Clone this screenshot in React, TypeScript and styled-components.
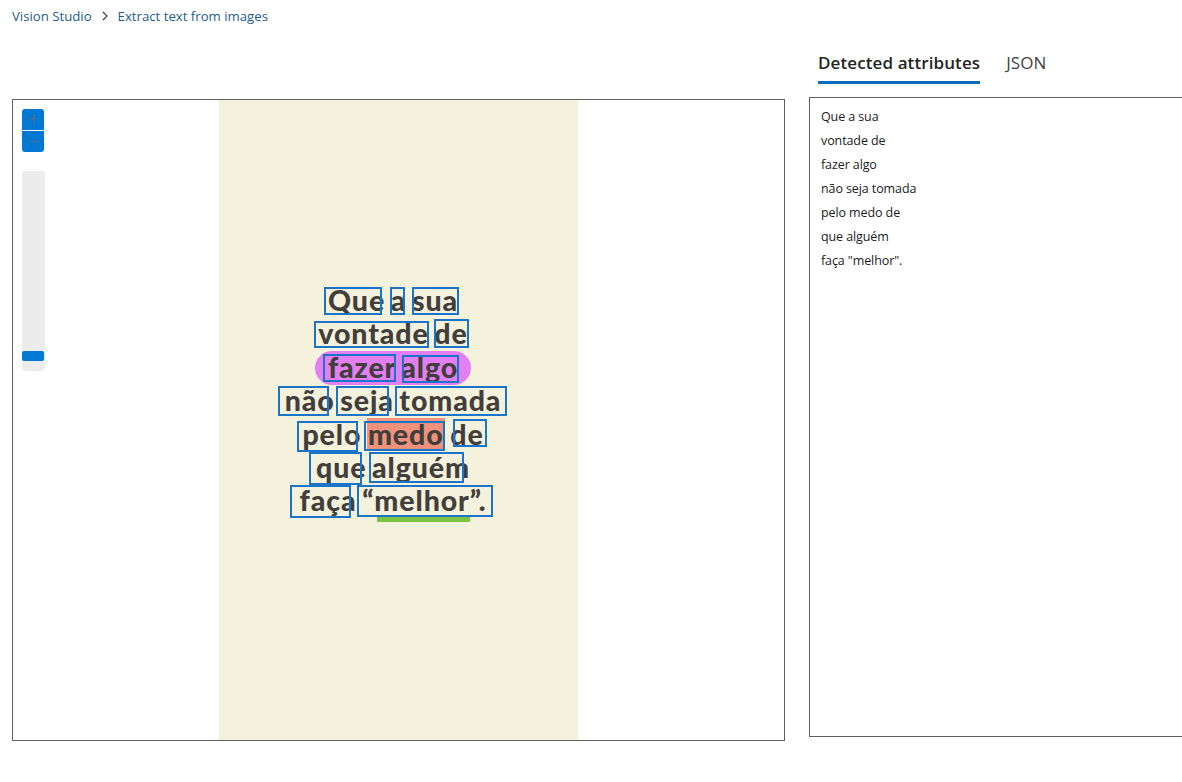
import styled, { createGlobalStyle } from "styled-components";

const GlobalStyle = createGlobalStyle`
    html, body {
        margin: 0;
        padding: 0;
        background: #ffffff;
        overflow: hidden;
    }
    body {
        font-family: "Open Sans", "Noto Sans", sans-serif;
        color: #242424;
    }
`;

const Page = styled.div`
    width: 1182px;
    height: 782px;
    padding: 6px 0 0 12px;
    box-sizing: border-box;
`;

const Breadcrumb = styled.nav`
    display: flex;
    align-items: center;
    gap: 9px;
    height: 20px;
    font-size: 13.2px;
    color: #1f5d8c;
`;

const Crumb = styled.span`
    white-space: nowrap;
`;

const Main = styled.div`
    display: flex;
    gap: 24px;
    margin-top: 14px;
`;

const LeftColumn = styled.div`
    padding-top: 59px;
`;

const Canvas = styled.div`
    position: relative;
    width: 771px;
    height: 640px;
    border: 1px solid #5f5f5f;
    display: flex;
    justify-content: center;
    overflow: hidden;
`;

const ZoomControl = styled.div`
    position: absolute;
    left: 9px;
    top: 9px;
    display: flex;
    flex-direction: column;
    gap: 19px;
`;

const ZoomButtons = styled.div`
    display: flex;
    flex-direction: column;
    gap: 1px;
`;

const ZoomButton = styled.div<{ $top?: boolean }>`
    width: 22px;
    height: 21px;
    background: #0078d4;
    border-radius: ${(p) => (p.$top ? "3px 3px 0 0" : "0 0 3px 3px")};
    color: #4a6c98;
    font-size: 15px;
    font-family: "DejaVu Sans", sans-serif;
    display: flex;
    align-items: center;
    justify-content: center;
    line-height: 1;
`;

const SliderTrack = styled.div`
    width: 23px;
    height: 200px;
    background: #ececec;
    border-radius: 4px;
    display: flex;
    flex-direction: column;
    justify-content: flex-end;
    padding-bottom: 10px;
    box-sizing: border-box;
`;

const SliderThumb = styled.div`
    width: 22px;
    height: 10px;
    background: #0078d4;
    border-radius: 2px;
`;

const Photo = styled.div`
    position: relative;
    width: 359px;
    height: 640px;
    background: #f4f1dc;
    box-sizing: border-box;
    padding-top: 184px;
    padding-right: 11px;
    display: flex;
    flex-direction: column;
    align-items: center;
`;

const PhotoLine = styled.div`
    height: 33.4px;
    line-height: 33.4px;
    font-family: "Lato", "DejaVu Sans", sans-serif;
    font-weight: 900;
    font-size: 28.5px;
    letter-spacing: 0.9px;
    word-spacing: -2px;
    color: #423e3b;
    white-space: nowrap;
`;

const Pill = styled.span`
    display: inline-block;
    height: 34px;
    line-height: 33px;
    background: #e37ff2;
    border-radius: 17px;
    padding: 0 13px;
`;

const Salmon = styled.span`
    display: inline-block;
    height: 32px;
    line-height: 32px;
    background: #f0917b;
    padding: 0 1px;
`;

const Underlined = styled.span`
    position: relative;
    &::after {
        content: "";
        position: absolute;
        left: 15px;
        right: 16px;
        bottom: -5px;
        height: 6px;
        background: #7cc243;
    }
`;

const WordBox = styled.div`
    position: absolute;
    border: 2px solid #1a74c9;
    box-sizing: border-box;
`;

const RightColumn = styled.div`
    display: flex;
    flex-direction: column;
`;

const Tabs = styled.div`
    display: flex;
    gap: 26px;
    padding-left: 9px;
    height: 57px;
    box-sizing: border-box;
`;

const Tab = styled.div<{ $active?: boolean }>`
    padding-top: 11px;
    font-size: 17px;
    font-weight: ${(p) => (p.$active ? 600 : 400)};
    color: ${(p) => (p.$active ? "#242424" : "#424242")};
    height: 30px;
    box-sizing: content-box;
    border-bottom: 3px solid ${(p) => (p.$active ? "#0f6cbd" : "transparent")};
    white-space: nowrap;
    letter-spacing: 0.1px;
`;

const ResultBox = styled.div`
    width: 420px;
    height: 640px;
    border: 1px solid #5f5f5f;
    box-sizing: border-box;
    padding: 7px 11px;
`;

const ResultLine = styled.div`
    font-size: 12.5px;
    line-height: 24px;
    color: #1b1b1b;
    letter-spacing: -0.1px;
`;

const lines = [
    "Que a sua",
    "vontade de",
    "fazer algo",
    "não seja tomada",
    "pelo medo de",
    "que alguém",
    'faça "melhor".',
];

const boxes = [
    [105, 187, 58, 28],
    [171, 187, 15, 28],
    [193, 187, 47, 28],
    [95, 221, 115, 27],
    [215, 219, 35, 29],
    [104, 254, 73, 28],
    [183, 255, 57, 28],
    [59, 286, 51, 30],
    [117, 286, 53, 30],
    [176, 286, 112, 30],
    [78, 321, 61, 31],
    [145, 321, 81, 30],
    [234, 319, 34, 28],
    [90, 352, 53, 33],
    [150, 352, 95, 31],
    [71, 385, 61, 33],
    [138, 385, 136, 32],
];

function App() {
    return (
        <Page>
            <GlobalStyle />
            <Breadcrumb>
                <Crumb>Vision Studio</Crumb>
                <svg width="8" height="10" viewBox="0 0 8 10">
                    <path d="M2 1 L6 5 L2 9" fill="none" stroke="#3b3b3b" strokeWidth="1.1" />
                </svg>
                <Crumb>Extract text from images</Crumb>
            </Breadcrumb>
            <Main>
                <LeftColumn>
                    <Canvas>
                        <Photo>
                            <PhotoLine>Que a sua</PhotoLine>
                            <PhotoLine>vontade de</PhotoLine>
                            <PhotoLine>
                                <Pill>fazer algo</Pill>
                            </PhotoLine>
                            <PhotoLine>não seja tomada</PhotoLine>
                            <PhotoLine>
                                pelo <Salmon>medo</Salmon> de
                            </PhotoLine>
                            <PhotoLine>que alguém</PhotoLine>
                            <PhotoLine>
                                faça <Underlined>“melhor”.</Underlined>
                            </PhotoLine>
                            {boxes.map(([x, y, w, h], i) => (
                                <WordBox key={i} style={{ left: x, top: y, width: w, height: h }} />
                            ))}
                        </Photo>
                        <ZoomControl>
                            <ZoomButtons>
                                <ZoomButton $top>+</ZoomButton>
                                <ZoomButton>−</ZoomButton>
                            </ZoomButtons>
                            <SliderTrack>
                                <SliderThumb />
                            </SliderTrack>
                        </ZoomControl>
                    </Canvas>
                </LeftColumn>
                <RightColumn>
                    <Tabs>
                        <Tab $active>Detected attributes</Tab>
                        <Tab>JSON</Tab>
                    </Tabs>
                    <ResultBox>
                        {lines.map((l) => (
                            <ResultLine key={l}>{l}</ResultLine>
                        ))}
                    </ResultBox>
                </RightColumn>
            </Main>
        </Page>
    );
}

export default App;
